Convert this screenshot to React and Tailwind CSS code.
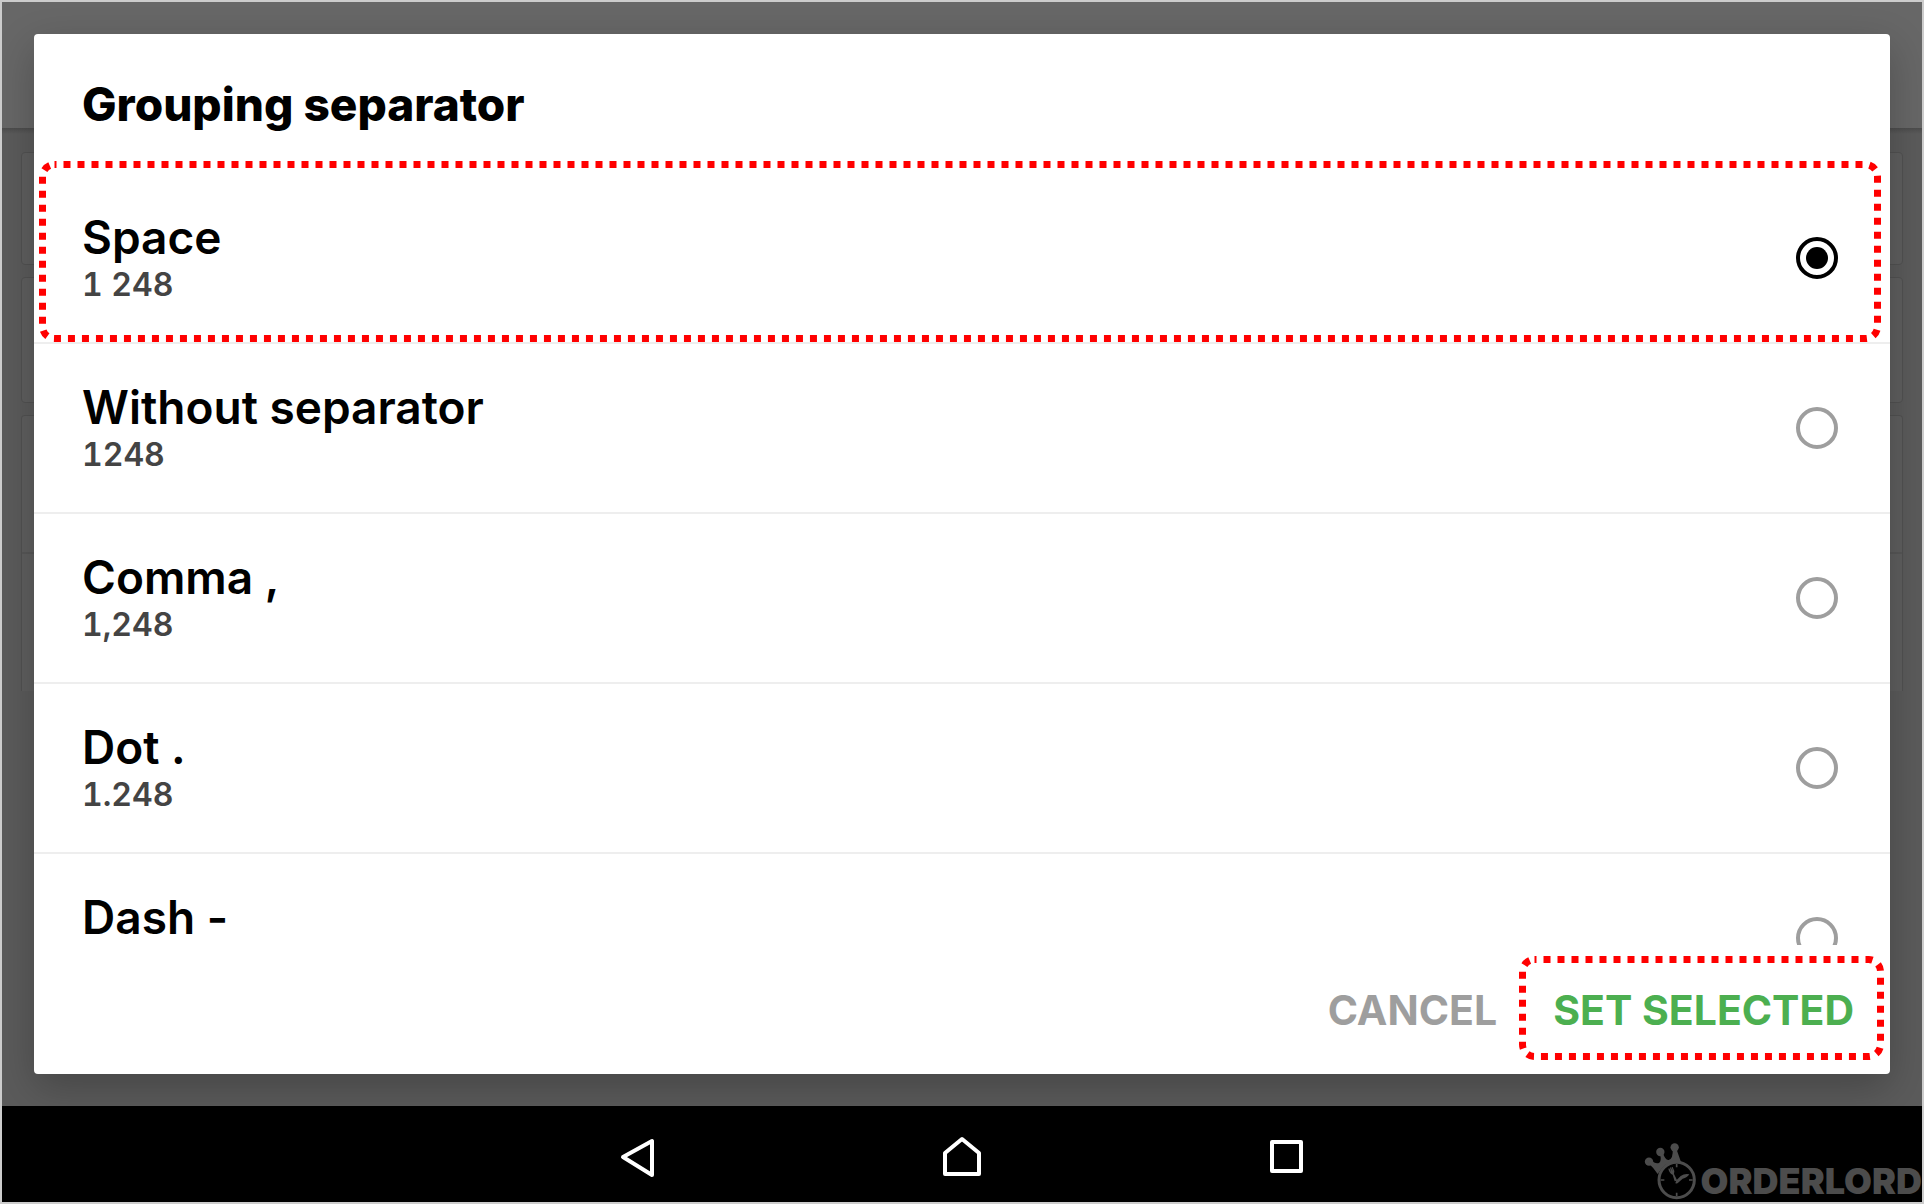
const options = [
  { id: "space", label: "Space", sample: "1 248" },
  { id: "none", label: "Without separator", sample: "1248" },
  { id: "comma", label: "Comma ,", sample: "1,248" },
  { id: "dot", label: "Dot .", sample: "1.248" },
  { id: "dash", label: "Dash -", sample: "" },
];

/* Dashed red outline that fills its positioned wrapper. */
function Highlight() {
  return (
    <svg className="block h-full w-full overflow-visible" aria-hidden="true">
      <svg x="3.5" y="3.5" width="100%" height="100%" className="overflow-visible">
        <rect
          rx="12"
          className="h-[calc(100%-7px)] w-[calc(100%-7px)]"
          fill="none"
          stroke="#ff0000"
          strokeWidth="7"
          strokeDasharray="7 7"
          strokeDashoffset="5"
        />
      </svg>
    </svg>
  );
}

/* Dimmed settings screen that sits behind the dialog. */
function Backdrop() {
  return (
    <div className="absolute inset-0 flex flex-col bg-[#5b5b5b]" aria-hidden="true">
      <div className="h-[126px] bg-[#676767]" />
      <div className="h-[6px] bg-linear-to-b from-[#4c4c4c] to-[#5b5b5b]" />
      <div className="flex flex-col gap-3 px-[19px] pt-[18px]">
        <div className="h-[113px] rounded border border-[#525252] bg-[#5f5f5f]" />
        <div className="h-[126px] rounded border border-[#525252] bg-[#5f5f5f]" />
        <div className="h-[276px] rounded-t border border-b-0 border-[#525252] bg-[#5f5f5f]">
          <div className="h-[138px] border-b-2 border-[#575757]" />
        </div>
      </div>
    </div>
  );
}

function OptionRow({ option, checked }) {
  return (
    <label className="flex h-[170px] shrink-0 items-center justify-between border-b-2 border-[#eeeeee] pr-[52px] pl-12">
      <span className="flex flex-col gap-1.5">
        <span className="text-[46px] leading-[48px] font-semibold text-black">{option.label}</span>
        <span className="min-h-9 text-[32px] leading-[36px] font-semibold text-[#444444] tabular-nums">{option.sample}</span>
      </span>
      <input
        type="radio"
        name="separator"
        value={option.id}
        defaultChecked={checked}
        className="grid size-[42px] appearance-none place-items-center rounded-full border-4 border-[#9e9e9e] before:size-[22px] before:rounded-full checked:border-black checked:before:bg-black checked:before:content-['']"
      />
    </label>
  );
}

function Logo() {
  return (
    <div className="absolute right-0 bottom-0 flex items-end gap-1 text-[#4c4c4c]">
      <svg viewBox="12 20 159 174" className="mb-[2px] h-[58px] w-[53px]" fill="currentColor" aria-hidden="true">
        <circle cx="27" cy="79" r="12.5" />
        <circle cx="61" cy="50" r="12.5" />
        <circle cx="104" cy="36" r="12.5" />
        <path d="M24 82 L33 73 Q47 88 58 82 Q66 76 59 54 L68 51 Q76 76 86 74 Q100 70 98 40 L109 40 L123 80 Q80 72 53 116 Q40 96 24 82Z" />
        <circle cx="110" cy="134" r="53" fill="#000" stroke="currentColor" strokeWidth="9" />
        <g stroke="currentColor" strokeWidth="5" fill="none">
          <path d="M110 86v10M110 172v10M62 134h11M147 134h11" />
        </g>
        <path d="M106 143 L110 134 L122 122 Q134 114 148 117 Q142 127 128 130 L116 141 Q110 147 106 143Z" />
        <path d="M104 138 L98 118 Q88 114 85 100 L88 99 L93 110 L90 97 L93 96 L98 108 L95 95 L98 95 Q105 106 102 116 L112 136Z" />
      </svg>
      <span className="text-[36px] leading-[42px] font-black">ORDERLORD</span>
    </div>
  );
}

function NavButton({ label, children }) {
  return (
    <button type="button" aria-label={label} className="size-12">
      <svg viewBox="0 0 48 48" className="size-12" fill="none" stroke="#fff" strokeWidth="4" strokeLinejoin="round">
        {children}
      </svg>
    </button>
  );
}

export default function App() {
  return (
    <div className="flex h-screen flex-col border-2 border-[#cccccc] font-['Inter',sans-serif]">
      <main className="relative min-h-0 flex-1 overflow-hidden p-8">
        <Backdrop />
        <div
          role="dialog"
          aria-labelledby="dialog-title"
          className="relative flex h-full flex-col rounded-[4px] bg-white shadow-[0_14px_40px_rgba(0,0,0,0.24)]"
        >
          <header className="flex h-[140px] shrink-0 items-center px-12">
            <h1 id="dialog-title" className="text-[46px] leading-[48px] font-extrabold text-black">
              Grouping separator
            </h1>
          </header>
          <div className="flex min-h-0 flex-1 flex-col overflow-y-auto [scrollbar-width:none]">
            {options.map((option, i) => (
              <OptionRow key={option.id} option={option} checked={i === 0} />
            ))}
          </div>
          <div className="pointer-events-none absolute top-[127px] right-[9px] left-[5px] h-[181px]">
            <Highlight />
          </div>
          <footer className="relative flex h-[129px] shrink-0 items-center justify-end gap-14 pr-9 text-[41px] leading-[48px] font-bold">
            <button type="button" className="text-[#9e9e9e]">CANCEL</button>
            <button type="button" className="text-[#4caf50]">SET SELECTED</button>
            <div className="pointer-events-none absolute right-[6px] bottom-[14px] h-[104px] w-[365px]">
              <Highlight />
            </div>
          </footer>
        </div>
      </main>
      <nav className="relative flex h-24 shrink-0 items-center justify-center gap-[276px] overflow-hidden bg-black">
        <NavButton label="Back">
          <path d="M38 11v34L9 27Z" />
        </NavButton>
        <NavButton label="Home">
          <path d="M7 23 24 9 41 23V44H7Z" />
        </NavButton>
        <NavButton label="Recent apps">
          <path d="M10 12h29v29H10Z" />
        </NavButton>
        <Logo />
      </nav>
    </div>
  );
}
